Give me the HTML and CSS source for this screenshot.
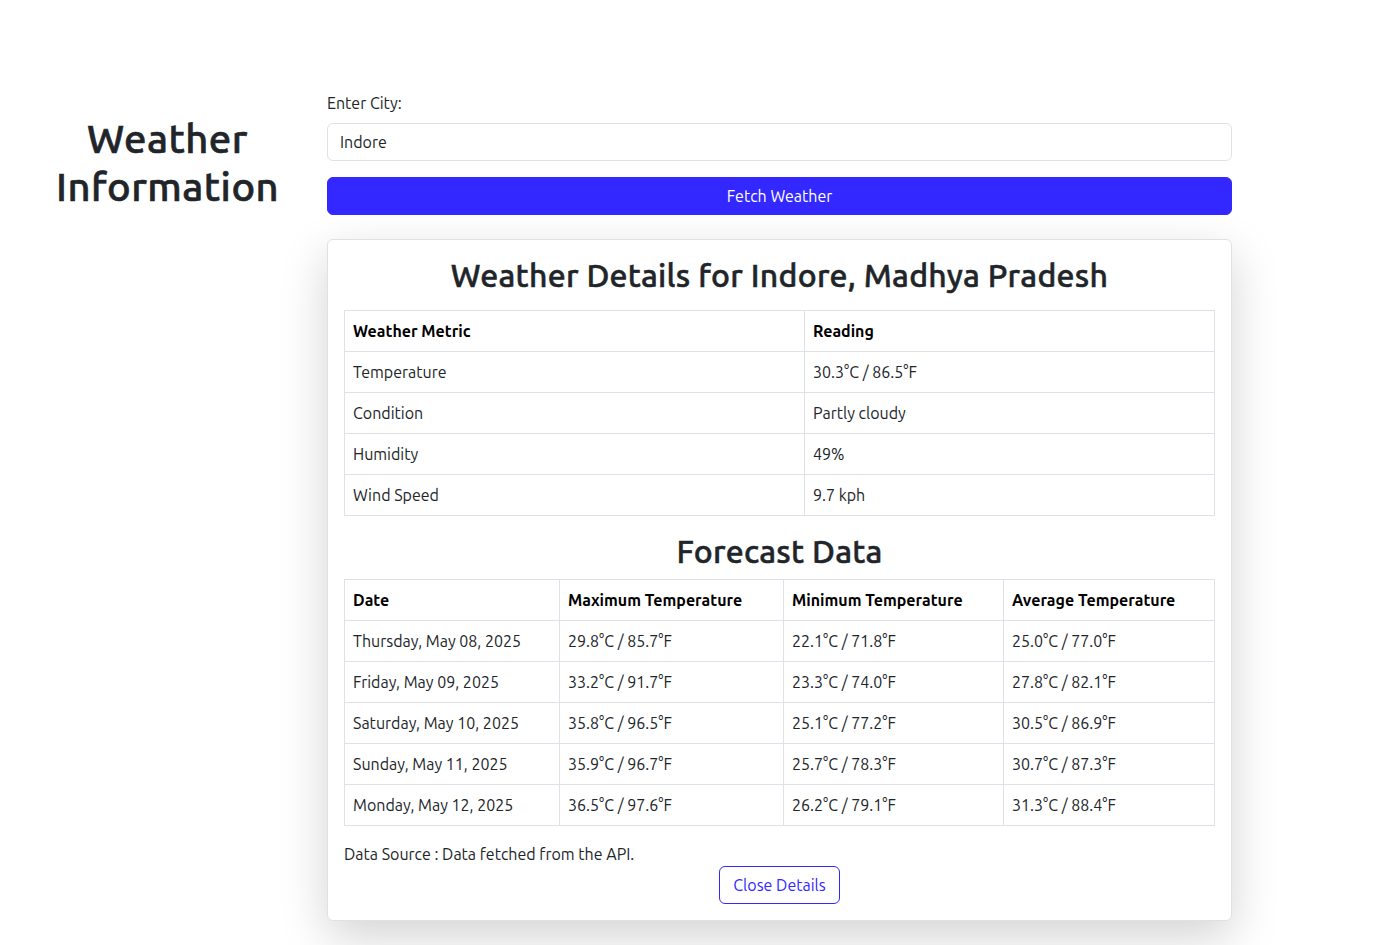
FILE: index.html
```html
<!DOCTYPE html>
<html lang="en">
<head>
<meta charset="utf-8">
<title>Weather Information</title>
<link rel="stylesheet" href="styles.css">
</head>
<body>
<div class="page">
  <div class="side">
    <h1 class="title">Weather Information</h1>
  </div>
  <main class="main">
    <form class="city-form">
      <label class="form-label" for="city">Enter City:</label>
      <input class="form-control" id="city" type="text" value="Indore">
      <button class="btn-fetch" type="button">Fetch Weather</button>
    </form>
    <section class="card">
      <h2 class="card-heading">Weather Details for Indore, Madhya Pradesh</h2>
      <table class="tbl tbl-current">
        <thead>
          <tr><th class="c-metric">Weather Metric</th><th>Reading</th></tr>
        </thead>
        <tbody>
          <tr><td>Temperature</td><td>30.3°C / 86.5°F</td></tr>
          <tr><td>Condition</td><td>Partly cloudy</td></tr>
          <tr><td>Humidity</td><td>49%</td></tr>
          <tr><td>Wind Speed</td><td>9.7 kph</td></tr>
        </tbody>
      </table>
      <h2 class="card-heading forecast-heading">Forecast Data</h2>
      <table class="tbl tbl-forecast">
        <thead>
          <tr>
            <th class="c-date">Date</th>
            <th class="c-max">Maximum Temperature</th>
            <th class="c-min">Minimum Temperature</th>
            <th>Average Temperature</th>
          </tr>
        </thead>
        <tbody>
          <tr><td>Thursday, May 08, 2025</td><td>29.8°C / 85.7°F</td><td>22.1°C / 71.8°F</td><td>25.0°C / 77.0°F</td></tr>
          <tr><td>Friday, May 09, 2025</td><td>33.2°C / 91.7°F</td><td>23.3°C / 74.0°F</td><td>27.8°C / 82.1°F</td></tr>
          <tr><td>Saturday, May 10, 2025</td><td>35.8°C / 96.5°F</td><td>25.1°C / 77.2°F</td><td>30.5°C / 86.9°F</td></tr>
          <tr><td>Sunday, May 11, 2025</td><td>35.9°C / 96.7°F</td><td>25.7°C / 78.3°F</td><td>30.7°C / 87.3°F</td></tr>
          <tr><td>Monday, May 12, 2025</td><td>36.5°C / 97.6°F</td><td>26.2°C / 79.1°F</td><td>31.3°C / 88.4°F</td></tr>
        </tbody>
      </table>
      <p class="source">Data Source : Data fetched from the API.</p>
      <div class="actions">
        <button class="btn-close" type="button">Close Details</button>
      </div>
    </section>
  </main>
</div>
</body>
</html>
```
FILE: styles.css
```css
* { box-sizing: border-box; }
html, body {
  margin: 0;
  padding: 0;
  background: #fff;
}
body {
  font-family: Ubuntu, Lato, "Liberation Sans", sans-serif;
  font-size: 16px;
  line-height: 24px;
  color: #212529;
}
.page {
  display: flex;
  align-items: flex-start;
  padding-top: 91px;
  padding-bottom: 40px;
}
.side {
  width: 327px;
  padding-left: 48px;
  padding-right: 40px;
}
.title {
  margin: 24px 0 0;
  font-size: 40px;
  line-height: 48px;
  font-weight: 500;
  letter-spacing: 0.011em;
  -webkit-text-stroke: 0.6px #212529;
  text-align: center;
  color: #212529;
}
.main {
  width: 905px;
}
.city-form {
  display: flex;
  flex-direction: column;
}
.form-label {
  display: block;
  margin-bottom: 8px;
  font-size: 16px;
  line-height: 24px;
}
.form-control {
  height: 38px;
  padding: 6px 12px;
  font-family: inherit;
  font-size: 16px;
  line-height: 24px;
  color: #212529;
  border: 1px solid #dee2e6;
  border-radius: 6px;
  background: #fff;
  outline: none;
}
.btn-fetch {
  margin-top: 16px;
  height: 38px;
  font-family: inherit;
  font-size: 16px;
  color: #fff;
  background: #3328ff;
  border: 1px solid #3328ff;
  border-radius: 6px;
  cursor: pointer;
}
.card {
  margin-top: 24px;
  padding: 16px;
  border: 1px solid #dee2e6;
  border-radius: 6px;
  background: #fff;
  box-shadow: 0 16px 48px rgba(0, 0, 0, 0.175);
}
.card-heading {
  margin: 0 0 16px;
  font-size: 32px;
  line-height: 38px;
  font-weight: 500;
  letter-spacing: 0.008em;
  -webkit-text-stroke: 0.5px #212529;
  text-align: center;
  color: #212529;
}
.forecast-heading {
  margin-top: 3px;
  margin-bottom: 9px;
}
.tbl {
  width: 100%;
  border-collapse: collapse;
  margin-bottom: 16px;
  table-layout: fixed;
}
.tbl th, .tbl td {
  border: 1px solid #dee2e6;
  padding: 8px 8px;
  text-align: left;
  font-size: 16px;
  line-height: 24px;
  color: #212529;
}
.tbl th {
  font-weight: 700;
  color: #000;
}
.c-metric { width: 460px; }
.c-date { width: 215px; }
.c-max { width: 224px; }
.c-min { width: 220px; }
.source {
  margin: 0;
}
.actions {
  display: flex;
  justify-content: center;
}
.btn-close {
  height: 38px;
  padding: 6px 13px;
  font-family: inherit;
  font-size: 16px;
  line-height: 24px;
  color: #3328ff;
  background: #fff;
  border: 1px solid #3328ff;
  border-radius: 6px;
  cursor: pointer;
}
```
